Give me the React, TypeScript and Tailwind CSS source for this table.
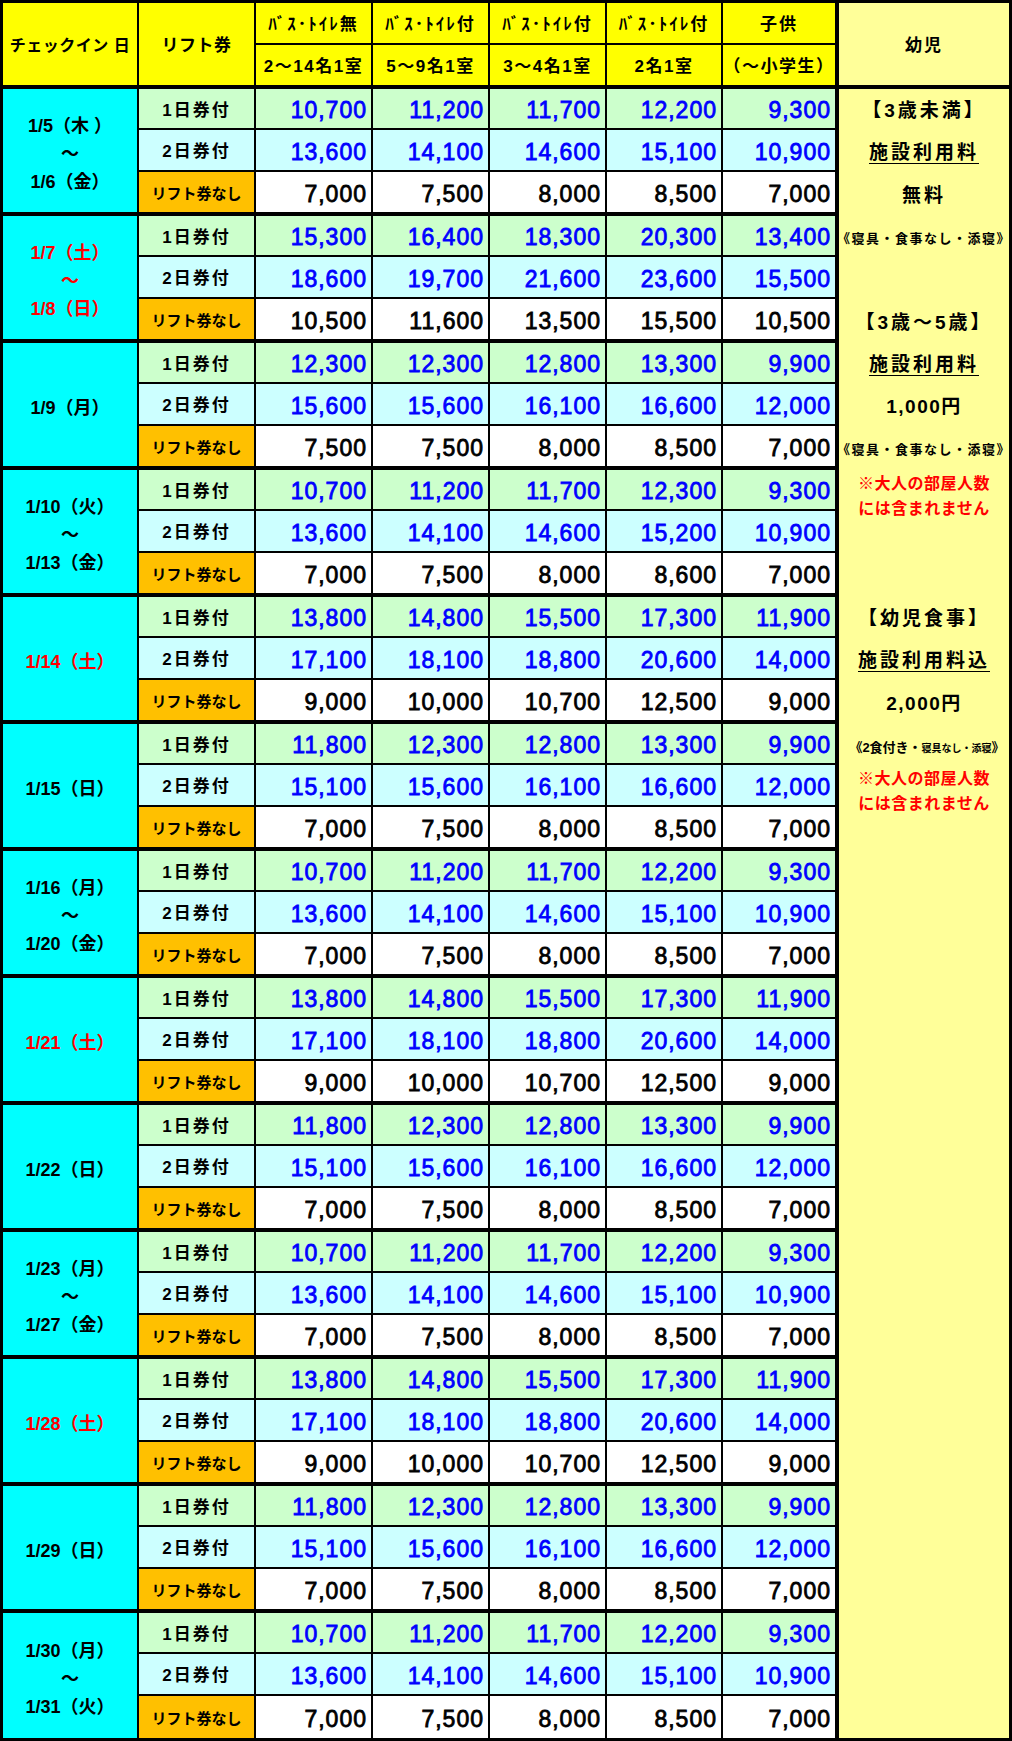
import React from "react";

const FONT = "font-['Liberation_Sans','Noto_Sans_CJK_JP',sans-serif]";

type Group = { date: string[]; red?: boolean; v: number[][] };

const A = [
  [10700, 11200, 11700, 12200, 9300],
  [13600, 14100, 14600, 15100, 10900],
  [7000, 7500, 8000, 8500, 7000],
];
const SAT = [
  [13800, 14800, 15500, 17300, 11900],
  [17100, 18100, 18800, 20600, 14000],
  [9000, 10000, 10700, 12500, 9000],
];
const SUN = [
  [11800, 12300, 12800, 13300, 9900],
  [15100, 15600, 16100, 16600, 12000],
  [7000, 7500, 8000, 8500, 7000],
];

const groups: Group[] = [
  { date: ["1/5（木 ）", "～", "1/6（金）"], v: A },
  {
    date: ["1/7（土）", "～", "1/8（日）"],
    red: true,
    v: [
      [15300, 16400, 18300, 20300, 13400],
      [18600, 19700, 21600, 23600, 15500],
      [10500, 11600, 13500, 15500, 10500],
    ],
  },
  {
    date: ["1/9（月）"],
    v: [
      [12300, 12300, 12800, 13300, 9900],
      [15600, 15600, 16100, 16600, 12000],
      [7500, 7500, 8000, 8500, 7000],
    ],
  },
  {
    date: ["1/10（火）", "～", "1/13（金）"],
    v: [
      [10700, 11200, 11700, 12300, 9300],
      [13600, 14100, 14600, 15200, 10900],
      [7000, 7500, 8000, 8600, 7000],
    ],
  },
  { date: ["1/14（土）"], red: true, v: SAT },
  { date: ["1/15（日）"], v: SUN },
  { date: ["1/16（月）", "～", "1/20（金）"], v: A },
  { date: ["1/21（土）"], red: true, v: SAT },
  { date: ["1/22（日）"], v: SUN },
  { date: ["1/23（月）", "～", "1/27（金）"], v: A },
  { date: ["1/28（土）"], red: true, v: SAT },
  { date: ["1/29（日）"], v: SUN },
  { date: ["1/30（月）", "～", "1/31（火）"], v: A },
];

const valueWidths = ["w-[117px]", "w-[117px]", "w-[117px]", "w-[116px]", "w-[112px]"];
const rowBg = ["bg-[#CCFFCC]", "bg-[#CCFFFF]", "bg-white"];
const liftLabels = ["1日券付", "2日券付", "リフト券なし"];

const headTop = ["ﾊﾞｽ･ﾄｲﾚ無", "ﾊﾞｽ･ﾄｲﾚ付", "ﾊﾞｽ･ﾄｲﾚ付", "ﾊﾞｽ･ﾄｲﾚ付", "子供"];
const headBottom = ["2～14名1室", "5～9名1室", "3～4名1室", "2名1室", "（～小学生）"];

function Header() {
  return (
    <div className="flex h-[86px] border-b-4 border-black bg-[#FFFF00]">
      <div className="w-[136px] shrink-0 border-r-2 border-black flex items-center justify-center pt-[3px] text-[16px] tracking-[0.5px]">
        チェックイン 日
      </div>
      <div className="w-[117px] shrink-0 border-r-2 border-black flex items-center justify-center pt-[3px] text-[17px] tracking-[0.5px]">
        リフト券
      </div>
      {valueWidths.map((w, i) => (
        <div
          key={i}
          className={`${w} shrink-0 flex flex-col ${i < 4 ? "border-r-2 border-black" : ""}`}
        >
          <div className="h-[42px] border-b-2 border-black flex items-center justify-center pt-[3px] text-[17px] tracking-[2px]">
            {headTop[i]}
          </div>
          <div className="flex-1 flex items-center justify-center pt-[3px] text-[17px] tracking-[1.5px]">
            {headBottom[i]}
          </div>
        </div>
      ))}
    </div>
  );
}

function GroupBlock({ g, last }: { g: Group; last: boolean }) {
  const heights = ["h-[41px] border-b-2", "h-[42px] border-b-2", last ? "h-[42px]" : "h-[40px]"];
  return (
    <div className={`flex ${last ? "" : "border-b-4 border-black"}`}>
      <div
        className={`w-[136px] shrink-0 border-r-2 border-black bg-[#00FFFF] flex flex-col items-center justify-center pt-[6px] text-[18px] leading-[28px] ${
          g.red ? "text-[#FF0000]" : "text-black"
        }`}
      >
        {g.date.map((d, i) => (
          <div key={i}>{d}</div>
        ))}
      </div>
      <div className="flex-1 flex flex-col">
        {g.v.map((row, r) => (
          <div key={r} className={`flex ${heights[r]} border-black`}>
            <div
              className={`w-[117px] shrink-0 border-r-2 border-black flex items-center justify-center pt-[4px] ${
                r === 2 ? "bg-[#FFC000] text-[15px]" : "bg-[#CCFFCC] text-[17px] tracking-[2px]"
              } ${r === 1 ? "bg-[#CCFFFF]" : ""}`}
            >
              {liftLabels[r]}
            </div>
            {row.map((n, c) => (
              <div
                key={c}
                className={`${valueWidths[c]} shrink-0 ${rowBg[r]} ${
                  c < 4 ? "border-r-2 border-black" : ""
                } flex items-center justify-end pr-[4px] pt-[4px] text-[23px] tracking-[1px] leading-none font-normal [-webkit-text-stroke:0.8px] ${
                  r === 2 ? "text-black" : "text-[#0000FF]"
                }`}
              >
                {n.toLocaleString("en-US")}
              </div>
            ))}
          </div>
        ))}
      </div>
    </div>
  );
}

const big = "text-[19px] tracking-[3px]";
const money = "text-[19px] tracking-[1.5px]";
const small = "text-[13px] tracking-[1.5px]";
const redNote = (
  <div className="text-[#FF0000] text-[16px] leading-[25px] text-center tracking-[0.5px] mt-[6px]">
    ※大人の部屋人数
    <br />
    には含まれません
  </div>
);

const infant: Record<number, React.ReactNode> = {
  0: <span className={big}>【3歳未満】</span>,
  1: <span className={`${big} underline underline-offset-[4px]`}>施設利用料</span>,
  2: <span className={big}>無料</span>,
  3: <span className={small}>《寝具・食事なし・添寝》</span>,
  5: <span className={big}>【3歳～5歳】</span>,
  6: <span className={`${big} underline underline-offset-[4px]`}>施設利用料</span>,
  7: <span className={money}>1,000円</span>,
  8: <span className={small}>《寝具・食事なし・添寝》</span>,
  9: redNote,
  12: <span className={big}>【幼児食事】</span>,
  13: <span className={`${big} underline underline-offset-[4px]`}>施設利用料込</span>,
  14: <span className={money}>2,000円</span>,
  15: (
    <span className="pl-[6px]">
      <span className="text-[13px]">《2食付き・</span>
      <span className="text-[10px]">寝具なし・添寝</span>
      <span className="text-[13px]">》</span>
    </span>
  ),
  16: redNote,
};

function InfantColumn() {
  const slots: string[] = [];
  groups.forEach((_, g) => {
    slots.push("h-[41px]", "h-[42px]", g === groups.length - 1 ? "h-[42px]" : "h-[44px]");
  });
  return (
    <div className="w-[170px] shrink-0 bg-[#FFFF99] flex flex-col">
      <div className="h-[86px] border-b-4 border-black flex items-center justify-center pt-[3px] text-[17px] tracking-[2px]">
        幼児
      </div>
      {slots.map((h, i) => (
        <div key={i} className={`${h} flex items-center justify-center pt-[4px] whitespace-nowrap`}>
          {infant[i] ?? null}
        </div>
      ))}
    </div>
  );
}

export default function App() {
  return (
    <div className={`w-[1012px] bg-white ${FONT} font-bold text-black`}>
      <div className="flex border-[3px] border-black">
        <div className="w-[836px] shrink-0 border-r-4 border-black flex flex-col">
          <Header />
          {groups.map((g, i) => (
            <GroupBlock key={i} g={g} last={i === groups.length - 1} />
          ))}
        </div>
        <InfantColumn />
      </div>
    </div>
  );
}
